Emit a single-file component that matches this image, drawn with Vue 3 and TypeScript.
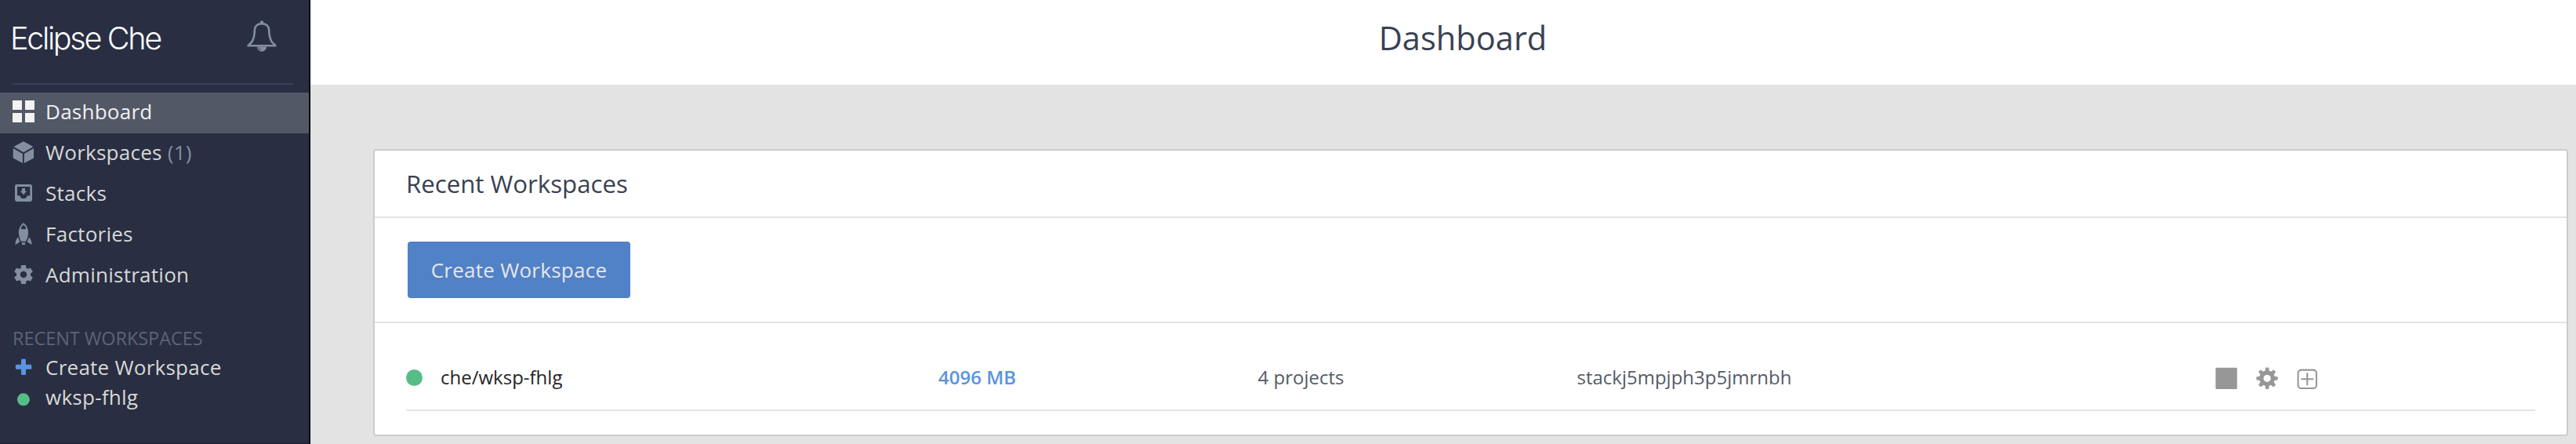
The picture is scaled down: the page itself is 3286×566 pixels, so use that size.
<script setup lang="ts">
type IconName = 'dashboard' | 'cube' | 'inbox' | 'rocket' | 'gear'

interface NavItem {
  label: string
  icon: IconName
  count?: number
  active?: boolean
}

interface Workspace {
  name: string
  memory: string
  projects: string
  stack: string
}

const navItems: NavItem[] = [
  { label: 'Dashboard', icon: 'dashboard', active: true },
  { label: 'Workspaces', icon: 'cube', count: 1 },
  { label: 'Stacks', icon: 'inbox' },
  { label: 'Factories', icon: 'rocket' },
  { label: 'Administration', icon: 'gear' },
]

const workspaces: Workspace[] = [
  { name: 'che/wksp-fhlg', memory: '4096 MB', projects: '4 projects', stack: 'stackj5mpjph3p5jmrnbh' },
]

const gearPath =
  'M19.43 12.98c.04-.32.07-.64.07-.98s-.03-.66-.07-.98l2.11-1.65c.19-.15.24-.42.12-.64l-2-3.46c-.12-.22-.39-.3-.61-.22l-2.49 1c-.52-.4-1.08-.73-1.69-.98l-.38-2.65C14.46 2.18 14.25 2 14 2h-4c-.25 0-.46.18-.49.42l-.38 2.65c-.61.25-1.17.59-1.69.98l-2.49-1c-.23-.09-.49 0-.61.22l-2 3.46c-.13.22-.07.49.12.64l2.11 1.65c-.04.32-.07.65-.07.98s.03.66.07.98l-2.11 1.65c-.19.15-.24.42-.12.64l2 3.46c.12.22.39.3.61.22l2.49-1c.52.4 1.08.73 1.69.98l.38 2.65c.03.24.24.42.49.42h4c.25 0 .46-.18.49-.42l.38-2.65c.61-.25 1.17-.59 1.69-.98l2.49 1c.23.09.49 0 .61-.22l2-3.46c.12-.22.07-.49-.12-.64l-2.11-1.65zM12 15.5c-1.93 0-3.5-1.57-3.5-3.5s1.57-3.5 3.5-3.5 3.5 1.57 3.5 3.5-1.57 3.5-3.5 3.5z'

const teeth = [0, 45, 90, 135, 180, 225, 270, 315]
</script>

<template>
  <div class="layout">
    <aside class="sidebar">
      <div class="brand">
        <span class="brand-name">Eclipse Che</span>
        <svg class="bell" viewBox="0 0 40 40" width="40" height="40">
          <circle cx="20" cy="2.3" r="2.1" fill="currentColor" />
          <path
            d="M20 4.3C13.5 4.3 11 8 10.800 13c-.2 6-.8 9.500-3 13.500C6.200 29.500 2.500 31 2.500 32.300H37.500C37.500 31 33.800 29.500 32.200 26.500c-2.200-4-2.800-7.500-3-13.500C29 8 26.500 4.300 20 4.300z"
            fill="none" stroke="currentColor" stroke-width="2.6" stroke-linejoin="round"
          />
          <path d="M14 33.500h12a6 6.200 0 0 1-12 0z" fill="currentColor" />
          <path d="M16 34.500a4.300 4.300 0 0 0 3 3.200" fill="none" stroke="#292e42" stroke-width=".8" />
        </svg>
      </div>

      <nav class="nav">
        <div v-for="item in navItems" :key="item.label" class="nav-item" :class="{ active: item.active }">
          <svg class="icon" viewBox="0 0 28 28" width="28" height="28">
            <path v-if="item.icon === 'dashboard'" d="M0 0h12v12H0zM16 0h12v12H16zM0 16h12v12H0zM16 16h12v12H16z" />
            <path
              v-else-if="item.icon === 'cube'"
              d="M14 .2 26.400 7 14 14.200 1.500 7zM.7 9l12.200 7v12L.7 21.500zM27 9l-12.200 7v12L27 21.500z"
            />
            <path
              v-else-if="item.icon === 'inbox'"
              fill-rule="evenodd"
              d="M5.400 3h17.200A2.400 2.400 0 0 1 25 5.400v17.200a2.400 2.400 0 0 1-2.400 2.400H5.400A2.400 2.400 0 0 1 3 22.600V5.400A2.400 2.400 0 0 1 5.400 3zM6 5.900v11.700h3.700a4.300 3.600 0 0 0 8.600 0h4V5.900zM12 8h4v3.500h2.200L14 16.200 9.800 11.500H12z"
            />
            <path
              v-else-if="item.icon === 'rocket'"
              fill-rule="evenodd"
              d="M14 0c4 3 6.200 7.500 6.100 12.500-.1 4-1.400 8-3 11.300h-6.200c-1.600-3.300-2.900-7.300-3-11.300C7.800 7.500 10 3 14 0zM14 2.700c-1.800 1.400-2.900 3.200-3.300 5.100 2 .6 4.600.6 6.600 0C16.900 5.900 15.800 4.100 14 2.700zM11.700 25.300h4.600l-.5 2.700h-3.600zM6.900 18.300l2.500 6L3.500 28c0-4 .8-6.500 3.400-9.700zM21.100 18.300l-2.500 6 5.900 3.700c0-4-.8-6.500-3.400-9.700z"
            />
            <path v-else :d="gearPath" transform="translate(-.4 -.4) scale(1.2)" />
          </svg>
          <span>{{ item.label }} <span v-if="item.count" class="count">({{ item.count }})</span></span>
        </div>
      </nav>

      <section class="recent">
        <div class="recent-title">RECENT WORKSPACES</div>
        <div class="recent-item">
          <svg class="icon plus" viewBox="0 0 28 28" width="28" height="28">
            <path d="M12.500 3.500h3a1.500 1.500 0 0 1 1.500 1.500v5.700h5.800a1.500 1.500 0 0 1 1.500 1.500v3a1.500 1.500 0 0 1-1.500 1.500H17v5.800a1.500 1.500 0 0 1-1.500 1.500h-3a1.500 1.500 0 0 1-1.500-1.500v-5.800H5.400a1.500 1.500 0 0 1-1.500-1.500v-3a1.500 1.500 0 0 1 1.500-1.500H11V5a1.500 1.500 0 0 1 1.500-1.500z" />
          </svg>
          <span>Create Workspace</span>
        </div>
        <div class="recent-item">
          <svg class="icon running" viewBox="0 0 28 28" width="28" height="28">
            <circle cx="13.900" cy="17.300" r="8" />
          </svg>
          <span>wksp-fhlg</span>
        </div>
      </section>
    </aside>

    <main class="main">
      <header class="page-header"><h1>Dashboard</h1></header>

      <section class="card">
        <h2 class="card-title">Recent Workspaces</h2>
        <div class="toolbar">
          <button type="button" class="create">Create Workspace</button>
        </div>
        <div class="list">
          <div v-for="ws in workspaces" :key="ws.name" class="row">
            <div class="cell name"><span class="dot"></span>{{ ws.name }}</div>
            <div class="cell memory">{{ ws.memory }}</div>
            <div class="cell">{{ ws.projects }}</div>
            <div class="cell">{{ ws.stack }}</div>
            <div class="cell actions">
              <svg viewBox="0 0 28 28" width="28" height="28">
                <rect x=".3" y=".7" width="27.400" height="27.300" rx="1.200" fill="currentColor" />
              </svg>
              <svg viewBox="0 0 28 28" width="28" height="28">
                <circle cx="14" cy="14.300" r="7.300" fill="none" stroke="currentColor" stroke-width="5.400" />
                <path
                  v-for="angle in teeth"
                  :key="angle"
                  d="M11.300 5.500 11.900 1.400Q12 .6 12.800.6h2.400q.8 0 .9.800l.6 4.100z"
                  :transform="`rotate(${angle} 14 14.300)`"
                  fill="currentColor"
                />
              </svg>
              <svg viewBox="0 0 28 28" width="28" height="28" fill="none" stroke="currentColor" stroke-width="2.1">
                <rect x="1.500" y="3.600" width="23.400" height="23.400" rx="4" />
                <path d="M5.200 15.300h16M13.200 7.300v16" />
              </svg>
            </div>
          </div>
        </div>
      </section>
    </main>
  </div>
</template>

<style>
body {
  margin: 0;
  overflow: hidden;
}
</style>

<style scoped>
.layout {
  display: flex;
  width: 3286px;
  height: 566px;
  overflow: hidden;
  background: #e3e3e3;
  font-family: "Open Sans", "Noto Sans", sans-serif;
}

.sidebar {
  box-sizing: border-box;
  flex: none;
  width: 396px;
  border-right: 2px solid #000;
  background: #292e42;
  color: #d8d8d6;
  font-size: 26px;
  letter-spacing: 0.26px;
  box-shadow: inset 0 -1px 0 #1f2234;
}

.brand {
  display: flex;
  justify-content: space-between;
  align-items: flex-start;
  box-sizing: border-box;
  height: 108px;
  margin: 0 20px 10px 16px;
  padding: 25px 20px 0 0;
  border-bottom: 2px solid #373f5c;
}

.brand-name {
  margin-left: -3px;
  color: #fff;
  font: 300 39.5px/48px Inter, "Liberation Sans", sans-serif;
  letter-spacing: -2.3px;
}

.bell {
  margin-top: 1px;
  color: #838ea1;
}

.nav-item {
  display: flex;
  align-items: center;
  gap: 14px;
  box-sizing: border-box;
  height: 52px;
  padding: 0 16px 4px;
  white-space: nowrap;
}

.nav-item.active {
  background: #525866;
  color: #f0f0f0;
}

.icon {
  flex: none;
  fill: #838ea1;
}

.active .icon {
  fill: #f2f2f2;
}

.count {
  color: #838ea1;
}

.recent {
  margin-top: 34px;
  padding: 0 16px;
}

.recent-title {
  box-sizing: border-box;
  height: 37px;
  padding-top: 1px;
  color: #5d6377;
  font-size: 23.4px;
  line-height: 37px;
  letter-spacing: 0;
}

.recent-item {
  display: flex;
  align-items: center;
  gap: 14px;
  height: 38px;
  line-height: 38px;
}

.icon.plus {
  fill: #5b93e0;
}

.icon.running {
  fill: #57bd87;
}

.main {
  flex: 1;
  min-width: 0;
}

.page-header {
  display: flex;
  justify-content: center;
  align-items: center;
  box-sizing: border-box;
  height: 108px;
  padding: 0 0 12px 50px;
  background: #fff;
  color: #394152;
}

h1 {
  margin: 0;
  font-size: 41.6px;
  font-weight: 400;
  line-height: 56px;
}

.card {
  box-sizing: border-box;
  width: 2800px;
  height: 366px;
  margin: 82px 0 0 80px;
  border: 2px solid #ccc;
  border-radius: 4px;
  background: #fff;
}

.card-title {
  height: 84px;
  margin: 0;
  padding-left: 40px;
  border-bottom: 2px solid #e3e3e3;
  color: #394152;
  font-size: 31.2px;
  font-weight: 400;
  line-height: 84px;
}

.toolbar {
  box-sizing: border-box;
  height: 134px;
  padding: 30px 0 0 42px;
  border-bottom: 2px solid #e3e3e3;
}

.create {
  width: 284px;
  height: 72px;
  padding: 0;
  border: 0;
  border-radius: 4px;
  background: #5181c7;
  color: #e6e6e6;
  font: 400 26px/70px "Open Sans", "Noto Sans", sans-serif;
  letter-spacing: 0.26px;
}

.list {
  padding: 28px 40px 0;
}

.row {
  display: grid;
  grid-template-columns: 679px 407.5px 407px 814.5px auto;
  align-items: center;
  height: 82px;
  border-bottom: 2px solid #e3e3e3;
}

.cell {
  color: #555b66;
  font-size: 24px;
  line-height: 34px;
  white-space: nowrap;
}

.name {
  display: flex;
  align-items: center;
  gap: 23px;
  color: #252525;
}

.dot {
  width: 21px;
  height: 21px;
  border-radius: 50%;
  background: #57bd87;
}

.memory {
  color: #5b93e0;
  font-weight: 600;
}

.actions {
  display: flex;
  gap: 24px;
  height: 28px;
  padding-top: 1px;
  color: #979797;
}
</style>
